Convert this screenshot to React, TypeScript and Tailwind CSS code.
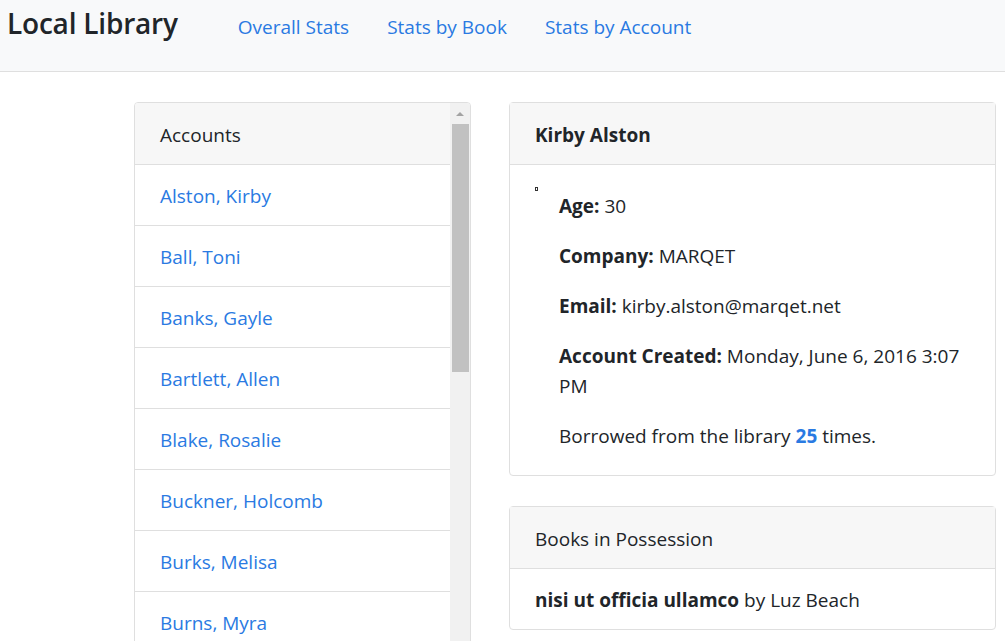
import { ReactNode } from 'react'

const accounts = [
  'Alston, Kirby',
  'Ball, Toni',
  'Banks, Gayle',
  'Bartlett, Allen',
  'Blake, Rosalie',
  'Buckner, Holcomb',
  'Burks, Melisa',
  'Burns, Myra',
  'Byers, Nita',
  'Cabrera, Ortega',
]

function Detail({ label, children }: { label: string; children: ReactNode }) {
  return (
    <p className="mb-5">
      <b className="font-bold">{label}</b> {children}
    </p>
  )
}

export default function App() {
  return (
    <div className="h-[641px] overflow-hidden bg-white text-[19px] leading-[30px] text-[#212529] font-['Segoe_UI','Open_Sans',sans-serif]">
      {/* navbar */}
      <nav className="h-[72px] bg-[#f8f9fa] border-b border-[#dfdfdf] flex items-start">
        <a className="pl-[7px] pt-[3px] text-[28px] leading-[40px] font-semibold text-[#212529] tracking-[-0.2px]">Local Library</a>
        <div className="flex gap-[38px] pl-[60px] pt-[12px] text-[#2a7ae2]">
          <a>Overall Stats</a>
          <a>Stats by Book</a>
          <a>Stats by Account</a>
        </div>
      </nav>

      <div className="flex items-start gap-[38px] pl-[134px] pt-[30px]">
        {/* accounts list with scrollbar */}
        <div className="w-[337px] h-[600px] flex border border-[#dfdfdf] rounded-t overflow-hidden">
          <div className="flex-1 min-w-0">
            <div className="h-[62px] px-[25px] pt-[17px] pb-[13px] bg-[#f7f7f7] border-b border-[#dfdfdf]">Accounts</div>
            {accounts.map(name => (
              <div key={name} className="h-[61px] px-[25px] pt-[16px] pb-[14px] border-b border-[#dfdfdf] text-[#2a7ae2]">
                {name}
              </div>
            ))}
          </div>
          <div className="w-[20px] bg-[#f1f1f1] flex flex-col items-center">
            <div className="h-[21px] flex items-center justify-center">
              <div className="w-0 h-0 border-l-[4px] border-r-[4px] border-b-[4px] border-l-transparent border-r-transparent border-b-[#a3a3a3]" />
            </div>
            <div className="w-[17px] h-[248px] bg-[#c1c1c1]" />
          </div>
        </div>

        {/* account details */}
        <div className="w-[487px] flex flex-col gap-[30px]">
          <div className="border border-[#dfdfdf] rounded">
            <div className="h-[62px] px-[25px] pt-[17px] pb-[13px] bg-[#f7f7f7] border-b border-[#dfdfdf] font-bold">Kirby Alston</div>
            <div className="relative pl-[49px] pr-[25px] pt-[26px] pb-[4px]">
              <span className="absolute left-[25px] top-[22px] w-[3px] h-[4px] border border-[#333]" />
              <Detail label="Age:">30</Detail>
              <Detail label="Company:">MARQET</Detail>
              <Detail label="Email:">kirby.alston@marqet.net</Detail>
              <p className="mb-5 whitespace-nowrap">
                <b className="font-bold">Account Created:</b> Monday, June 6, 2016 3:07
                <br />
                PM
              </p>
              <p className="mb-5">
                Borrowed from the library <b className="font-bold text-[#2a7ae2]">25</b> times.
              </p>
            </div>
          </div>

          <div className="border border-[#dfdfdf] rounded">
            <div className="h-[62px] px-[25px] pt-[17px] pb-[13px] bg-[#f7f7f7] border-b border-[#dfdfdf]">Books in Possession</div>
            <div className="h-[60px] px-[25px] pt-[16px] pb-[14px]">
              <b className="font-bold">nisi ut officia ullamco</b> by Luz Beach
            </div>
          </div>
        </div>
      </div>
    </div>
  )
}
